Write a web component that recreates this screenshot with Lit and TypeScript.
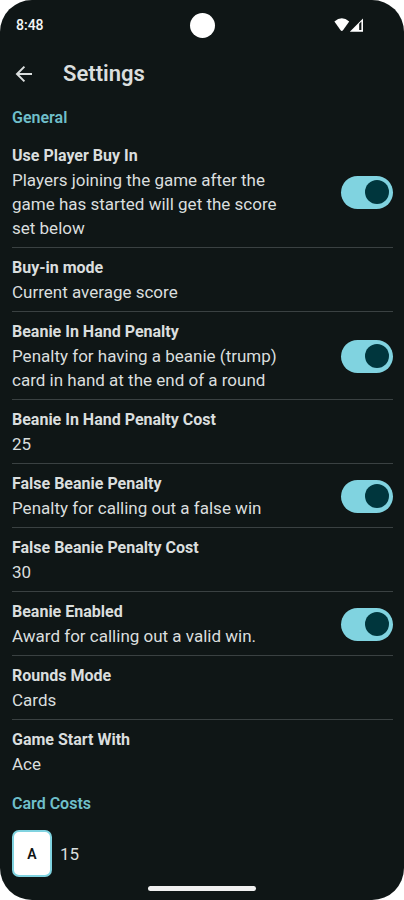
import { LitElement, html, css } from "lit";
import { customElement } from "lit/decorators.js";

@customElement("status-bar")
class StatusBar extends LitElement {
  static styles = css`
    :host {
      display: grid;
      grid-template-columns: 1fr auto 1fr;
      align-items: center;
      height: 50px;
      padding: 0 40px 0 16px;
      color: #f4f6f6;
    }
    .time {
      font-size: 14px;
      font-weight: 500;
      line-height: 16px;
    }
    .camera {
      width: 25px;
      height: 25px;
      border-radius: 50%;
      background: #ffffff;
      margin-left: 24px;
    }
    .icons {
      justify-self: end;
      display: flex;
    }
    svg {
      display: block;
    }
  `;

  render() {
    return html`
      <span class="time">8:48</span>
      <span class="camera"></span>
      <span class="icons">
        <svg width="30" height="16" viewBox="0 0 30 16" fill="#ffffff" role="img" aria-label="Wi-Fi and mobile signal">
          <path d="M0.4 4.4Q7.8 -1.8 15.2 4.4L9 13.2Q7.8 14.8 6.6 13.2Z" />
          <path fill-rule="evenodd" d="M29 1.4V14.8H15.8ZM25.2 6.8V13H27.4V4.6Z" />
        </svg>
      </span>
    `;
  }
}

@customElement("setting-row")
class SettingRow extends LitElement {
  static properties = {
    label: { type: String },
    detail: { type: String },
    toggle: { type: Boolean },
  };
  declare label: string;
  declare detail: string;
  declare toggle: boolean;

  static styles = css`
    :host {
      display: block;
      border-bottom: 1px solid #3a4142;
    }
    :host(:last-of-type) {
      border-bottom-color: transparent;
    }
    .row {
      box-sizing: border-box;
      width: 100%;
      display: flex;
      align-items: center;
      gap: 48px;
      margin: 0;
      padding: 8px 0 7px;
      border: 0;
      background: none;
      color: #dadede;
      font: inherit;
      text-align: left;
      cursor: pointer;
    }
    .text {
      flex: 1;
      min-width: 0;
    }
    .label,
    .detail {
      display: block;
      line-height: 24px;
    }
    .label {
      font-size: 16px;
      font-weight: 700;
    }
    .detail {
      font-size: 17px;
    }
    .switch {
      appearance: none;
      flex: none;
      display: flex;
      align-items: center;
      justify-content: flex-end;
      box-sizing: border-box;
      width: 52px;
      height: 33px;
      margin: 0;
      padding: 0 4px;
      border-radius: 17px;
      background: #3a4142;
      cursor: pointer;
    }
    .switch::before {
      content: "";
      width: 24px;
      height: 24px;
      border-radius: 50%;
      background: #00363d;
    }
    .switch:checked {
      background: #80d3e0;
    }
    .switch:not(:checked) {
      justify-content: flex-start;
    }
  `;

  render() {
    const text = html`
      <span class="text">
        <span class="label">${this.label}</span>
        <span class="detail">${this.detail}</span>
      </span>
    `;
    return this.toggle
      ? html`<label class="row">${text}<input class="switch" type="checkbox" role="switch" checked /></label>`
      : html`<button class="row" type="button">${text}</button>`;
  }
}

@customElement("app-root")
class AppRoot extends LitElement {
  private settings = [
    {
      label: "Use Player Buy In",
      detail: "Players joining the game after the game has started will get the score set below",
      toggle: true,
    },
    { label: "Buy-in mode", detail: "Current average score", toggle: false },
    {
      label: "Beanie In Hand Penalty",
      detail: "Penalty for having a beanie (trump) card in hand at the end of a round",
      toggle: true,
    },
    { label: "Beanie In Hand Penalty Cost", detail: "25", toggle: false },
    { label: "False Beanie Penalty", detail: "Penalty for calling out a false win", toggle: true },
    { label: "False Beanie Penalty Cost", detail: "30", toggle: false },
    { label: "Beanie Enabled", detail: "Award for calling out a valid win.", toggle: true },
    { label: "Rounds Mode", detail: "Cards", toggle: false },
    { label: "Game Start With", detail: "Ace", toggle: false },
  ];

  static styles = css`
    :host {
      display: block;
      background: #ffffff;
      font-family: Roboto, "Liberation Sans", sans-serif;
    }
    .screen {
      box-sizing: border-box;
      min-height: 100vh;
      display: flex;
      flex-direction: column;
      border-radius: 32px;
      background: #0f1616;
      color: #dadede;
      overflow: hidden;
    }
    .bar {
      display: flex;
      align-items: center;
      gap: 27px;
      height: 48px;
      padding: 0 12px;
    }
    .back {
      display: flex;
      padding: 0;
      border: 0;
      background: none;
      color: inherit;
      cursor: pointer;
    }
    h1 {
      margin: 0;
      font-size: 22px;
      font-weight: 600;
      line-height: 28px;
    }
    main {
      padding: 0 11px 0 12px;
    }
    h2 {
      margin: 0;
      padding: 8px 0 7px;
      font-size: 16px;
      font-weight: 600;
      line-height: 23px;
      color: #6fbfca;
    }
    .cost {
      display: flex;
      align-items: center;
      gap: 8px;
      margin-top: 8px;
      padding: 0;
      border: 0;
      background: none;
      color: inherit;
      font: inherit;
      font-size: 17px;
      cursor: pointer;
    }
    .card {
      box-sizing: border-box;
      display: grid;
      place-items: center;
      width: 40px;
      height: 47px;
      border: 2px solid #80d3e0;
      border-radius: 7px;
      background: #ffffff;
      color: #111414;
      font-size: 14px;
      font-weight: 600;
    }
    .home {
      width: 108px;
      height: 5px;
      margin: auto auto 9px;
      border-radius: 3px;
      background: #f0f0f0;
    }
  `;

  render() {
    return html`
      <div class="screen">
        <status-bar></status-bar>
        <header class="bar">
          <button class="back" type="button" aria-label="Back">
            <svg width="24" height="24" viewBox="0 0 24 24" fill="none" stroke="currentColor" stroke-width="2">
              <path d="M20 12H5.4M12.4 4.6L5 12L12.4 19.4" />
            </svg>
          </button>
          <h1>Settings</h1>
        </header>
        <main>
          <h2>General</h2>
          ${this.settings.map(
            (s) => html`<setting-row .label=${s.label} .detail=${s.detail} .toggle=${s.toggle}></setting-row>`
          )}
          <h2>Card Costs</h2>
          <button class="cost" type="button"><span class="card">A</span><span>15</span></button>
        </main>
        <div class="home"></div>
      </div>
    `;
  }
}
